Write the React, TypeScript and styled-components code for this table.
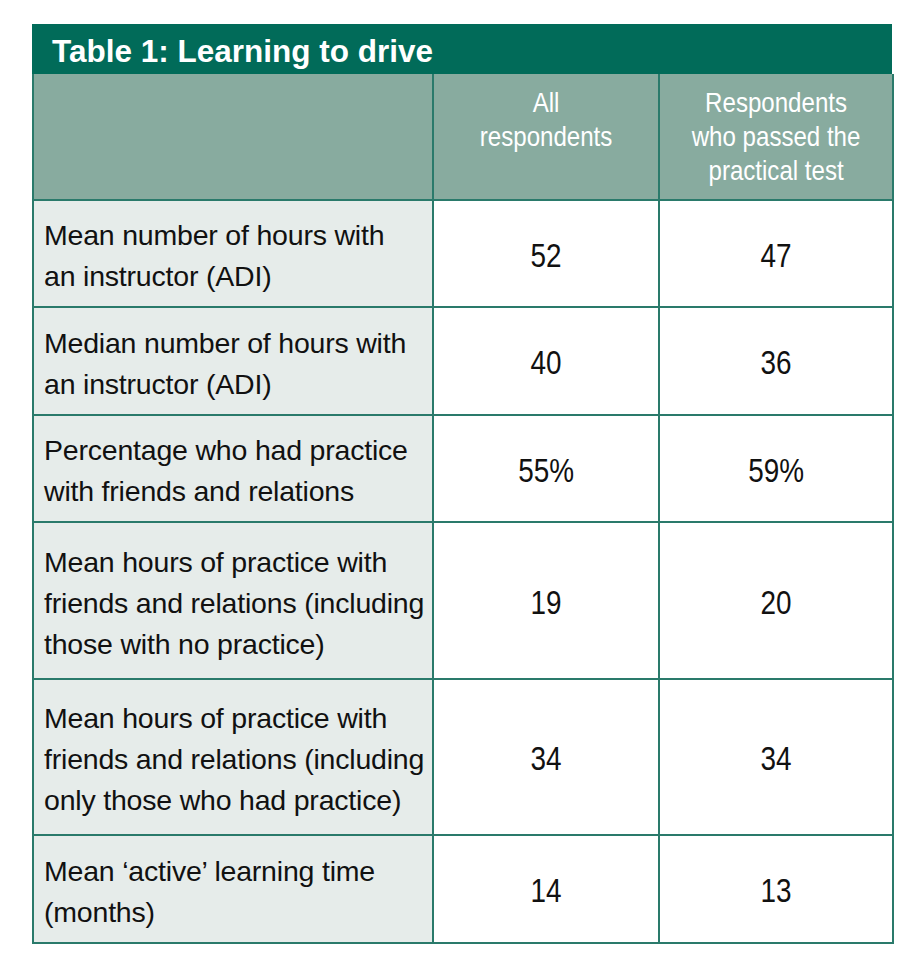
import React from "react";
import styled, { createGlobalStyle } from "styled-components";

const Global = createGlobalStyle`
  html, body { margin: 0; padding: 0; background: #ffffff; }
  body { font-family: "Liberation Sans", Arial, Helvetica, sans-serif; }
`;

const Page = styled.div`
  padding: 24px 0 0 32px;
`;

const Frame = styled.div`
  width: 860px;
`;

const TitleBar = styled.div`
  height: 50px;
  background: #016b59;
  color: #ffffff;
  font-weight: bold;
  font-size: 31.5px;
  line-height: 46px;
  padding: 4px 0 0 20px;
  box-sizing: border-box;
  white-space: nowrap;
`;

const Table = styled.table`
  width: 860px;
  border-collapse: collapse;
  table-layout: fixed;
`;

const HeadCell = styled.th`
  background: #88ab9f;
  color: #ffffff;
  font-weight: normal;
  font-size: 28px;
  line-height: 34px;
  text-align: center;
  vertical-align: top;
  padding: 12px 0 0;
  height: 126px;
  box-sizing: border-box;
  border: 2px solid #2a7a6b;
  border-top: none;
  white-space: nowrap;
`;

const Narrow = styled.span<{ $sx: number }>`
  display: inline-block;
  transform: scaleX(${(p) => p.$sx});
  transform-origin: center;
`;

const LabelCell = styled.td<{ $h: number }>`
  background: #e6ecea;
  color: #111111;
  font-size: 28.5px;
  letter-spacing: -0.2px;
  line-height: 41px;
  padding: 5px 0 0 10px;
  height: ${(p) => p.$h}px;
  box-sizing: border-box;
  border: 2px solid #2a7a6b;
  vertical-align: middle;
  white-space: nowrap;
`;

const ValueCell = styled.td`
  background: #ffffff;
  color: #111111;
  font-size: 34px;
  line-height: 40px;
  text-align: center;
  vertical-align: middle;
  padding-top: 3px;
  border: 2px solid #2a7a6b;
`;

const rows: { label: React.ReactNode; a: string; b: string; h: number }[] = [
  { label: <>Mean number of hours with<br />an instructor (ADI)</>, a: "52", b: "47", h: 107 },
  { label: <>Median number of hours with<br />an instructor (ADI)</>, a: "40", b: "36", h: 108 },
  { label: <>Percentage who had practice<br />with friends and relations</>, a: "55%", b: "59%", h: 107 },
  { label: <>Mean hours of practice with<br />friends and relations (including<br />those with no practice)</>, a: "19", b: "20", h: 157 },
  { label: <>Mean hours of practice with<br />friends and relations (including<br />only those who had practice)</>, a: "34", b: "34", h: 156 },
  { label: <>Mean ‘active’ learning time<br />(months)</>, a: "14", b: "13", h: 108 },
];

export default function App() {
  return (
    <Page>
      <Global />
      <Frame>
        <TitleBar>Table 1: Learning to drive</TitleBar>
        <Table>
          <colgroup>
            <col style={{ width: 400 }} />
            <col style={{ width: 226 }} />
            <col style={{ width: 234 }} />
          </colgroup>
          <thead>
            <tr>
              <HeadCell />
              <HeadCell>
                <Narrow $sx={0.86}>All<br />respondents</Narrow>
              </HeadCell>
              <HeadCell>
                <Narrow $sx={0.86}>Respondents<br />who passed the<br />practical test</Narrow>
              </HeadCell>
            </tr>
          </thead>
          <tbody>
            {rows.map((r, i) => (
              <tr key={i}>
                <LabelCell $h={r.h}>{r.label}</LabelCell>
                <ValueCell>
                  <Narrow $sx={0.82}>{r.a}</Narrow>
                </ValueCell>
                <ValueCell>
                  <Narrow $sx={0.82}>{r.b}</Narrow>
                </ValueCell>
              </tr>
            ))}
          </tbody>
        </Table>
      </Frame>
    </Page>
  );
}
